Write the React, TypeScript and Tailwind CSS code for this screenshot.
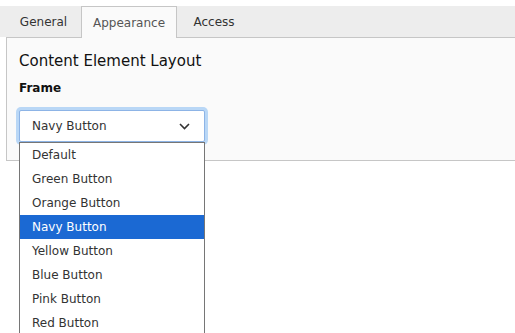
import React from "react";

const items = [
  "Default",
  "Green Button",
  "Orange Button",
  "Navy Button",
  "Yellow Button",
  "Blue Button",
  "Pink Button",
  "Red Button",
];

export default function App() {
  return (
    <div className="relative w-[515px] h-[333px] overflow-hidden bg-white text-[#333] font-['DejaVu_Sans',Verdana,sans-serif]">
      <div className="pt-[6px]">
        <div className="flex h-[31px] bg-[#ededed] pl-[6px] text-[12px]">
          <div className="w-[75px] flex items-center justify-center text-[#333]">General</div>
          <div className="relative z-10 w-[96px] h-[32px] flex items-center justify-center border-l border-t border-r border-[#c6c6c6] bg-[#fafafa] text-[#555]">
            Appearance
          </div>
          <div className="w-[74px] flex items-center justify-center text-[#333]">Access</div>
        </div>
        <div className="ml-[6px] h-[124px] border-l border-t border-b border-[#c6c6c6] bg-[#fafafa] pl-[12px] pt-[13px]">
          <div className="text-[15px] leading-[20px] text-[#111]">Content Element Layout</div>
          <div className="mt-[9px] text-[12px] leading-[16px] font-bold text-[#111]">Frame</div>
          <div className="relative mt-[14px] w-[186px]">
            <div className="flex h-[32px] items-center justify-between rounded-[2px] border border-[#8db4e6] bg-white pl-[12px] pr-[14px] text-[12px] shadow-[0_0_0_3px_#b9d7f6]">
              <span className="text-[#333]">Navy Button</span>
              <svg width="11" height="7" viewBox="0 0 11 7" fill="none">
                <path d="M1 1l4.5 4.5L10 1" stroke="#333" strokeWidth="1.6" />
              </svg>
            </div>
            <div className="absolute left-0 top-[32px] z-20 w-[186px] border border-[#767676] bg-white text-[12px]">
              {items.map((it) => (
                <div
                  key={it}
                  className={
                    it === "Navy Button"
                      ? "h-[24px] pl-[12px] flex items-center bg-[#1b69d3] text-white"
                      : "h-[24px] pl-[12px] flex items-center text-[#333]"
                  }
                >
                  {it}
                </div>
              ))}
            </div>
          </div>
        </div>
      </div>
    </div>
  );
}
